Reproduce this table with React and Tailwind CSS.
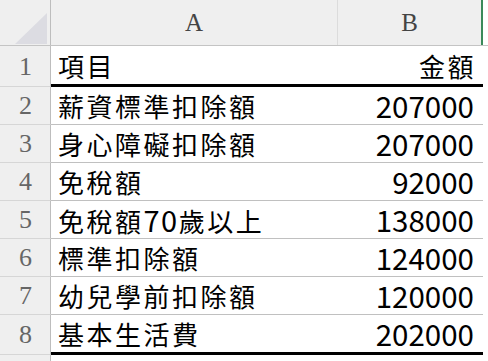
import React from "react";

const rows = [
  ["項目", "金額"],
  ["薪資標準扣除額", "207000"],
  ["身心障礙扣除額", "207000"],
  ["免稅額", "92000"],
  [null, "138000"],
  ["標準扣除額", "124000"],
  ["幼兒學前扣除額", "120000"],
  ["基本生活費", "202000"],
];

const serif = { fontFamily: '"Liberation Serif", "DejaVu Serif", serif' };
const body = { fontFamily: '"Noto Sans CJK TC", "Noto Sans", sans-serif' };

export default function App() {
  return (
    <div className="w-[488px] h-[361px] overflow-hidden bg-white relative">
      {/* column header */}
      <div className="flex h-[46px] bg-[#efefef] border-b border-[#c4c4c4]">
        <div className="w-[51px] h-full border-r border-[#bdbdbd] relative shrink-0">
          <svg className="absolute left-[15px] top-[13px]" width="32" height="31" viewBox="0 0 32 31">
            <polygon points="32,0 32,31 0,31" fill="#dcdce2" />
          </svg>
        </div>
        <div className="w-[287px] h-full border-r border-[#dcdcdc] flex items-center justify-center text-[25px] text-[#444]" style={serif}>
          A
        </div>
        <div className="w-[145px] h-full flex items-center justify-center text-[25px] text-[#444] border-r-2 border-[#3a8a5a]" style={serif}>
          B
        </div>
        <div className="flex-1 bg-white" />
      </div>
      {rows.map((r, i) => {
        const first = i === 0;
        const last = i === rows.length - 1;
        const thick = first || last;
        return (
          <div key={i} className={`flex ${first ? "h-[41px]" : last ? "h-[40px]" : "h-[38px]"}`}>
            <div
              className="w-[51px] shrink-0 bg-[#efefef] border-r border-b border-r-[#bdbdbd] border-b-[#d6d6d6] flex items-center justify-center text-[26px] text-[#666] pl-[1px]"
              style={serif}
            >
              {i + 1}
            </div>
            <div
              className={`w-[432px] flex items-center justify-between pl-[7px] pr-[9px] ${
                thick ? "border-b-[3px] border-black" : "border-b border-[#c0c0c0]"
              }`}
              style={body}
            >
              <span className="text-[26px] tracking-[2.5px] text-black whitespace-nowrap">
                {r[0] === null ? (
                  <>
                    免稅額<span className="text-[29px] tracking-[1.5px]">70</span>歲以上
                  </>
                ) : (
                  r[0]
                )}
              </span>
              <span className={`text-black ${first ? "text-[26px] tracking-[2.5px] -mr-[2px]" : "text-[29.5px] tracking-[0px]"}`}>{r[1]}</span>
            </div>
            <div className="flex-1 bg-white" />
          </div>
        );
      })}
      <div className="flex h-[20px]">
        <div className="w-[51px] shrink-0 bg-[#efefef] border-r border-[#bdbdbd]" />
        <div className="flex-1 bg-white" />
      </div>
    </div>
  );
}
